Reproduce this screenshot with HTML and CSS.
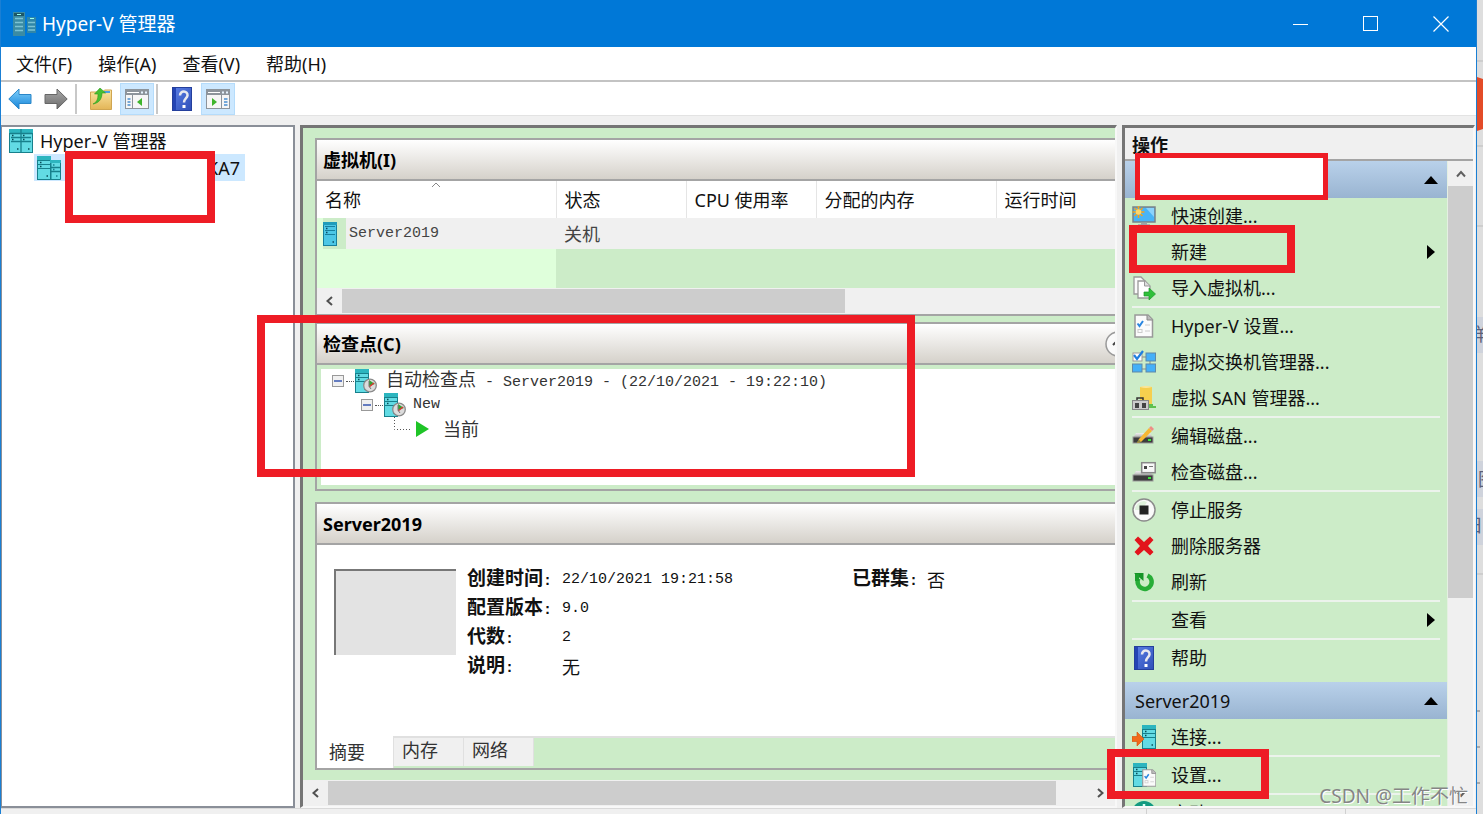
FILE: index.html
```html
<!DOCTYPE html>
<html lang="zh-CN">
<head>
<meta charset="utf-8">
<meta name="viewport" content="width=device-width, initial-scale=1">
<title>Hyper-V 管理器</title>
<link rel="stylesheet" href="styles.css">
</head>
<body>
<svg class="sprite" aria-hidden="true">
  <defs>
    <linearGradient id="g-blue" x1="0" y1="0" x2="0" y2="1"><stop offset="0" stop-color="#7fd0fb"/><stop offset="1" stop-color="#1583d8"/></linearGradient>
    <linearGradient id="g-gray" x1="0" y1="0" x2="0" y2="1"><stop offset="0" stop-color="#a8a8a8"/><stop offset="1" stop-color="#6c6c6c"/></linearGradient>
    <linearGradient id="g-fold" x1="0" y1="0" x2="0" y2="1"><stop offset="0" stop-color="#fbe6a2"/><stop offset="1" stop-color="#e3b557"/></linearGradient>
    <linearGradient id="g-book" x1="0" y1="0" x2="1" y2="1"><stop offset="0" stop-color="#5b7fe6"/><stop offset="1" stop-color="#2f4fb8"/></linearGradient>
    <linearGradient id="g-disk" x1="0" y1="0" x2="0" y2="1"><stop offset="0" stop-color="#f0f0f0"/><stop offset="1" stop-color="#a5a5a5"/></linearGradient>
  </defs>
  <symbol id="i-tower" viewBox="0 0 14 24">
    <rect x="0.5" y="0.5" width="13" height="23" fill="#62dbe4" stroke="#17808c"/>
    <rect x="0" y="0" width="14" height="4" fill="#2cb5bf"/>
    <path d="M1 4.500H13M1 8.500H13M1 12.500H13" stroke="#17808c"/>
    <path d="M3 6.500h1.500M3 10.500h1.500M9.500 20h1.500" stroke="#084c56" stroke-width="1.500"/>
  </symbol>
  <symbol id="i-vm" viewBox="0 0 14 24">
    <rect x="0.500" y="0.500" width="13" height="23" fill="#4cc7e6" stroke="#17809e"/>
    <rect x="0" y="0" width="14" height="3" fill="#1f9cbb"/>
    <path d="M2 4.500H12M2 8.500H12M2 12.500H12" stroke="#17809e"/>
    <path d="M3 6.500h1.500M3 10.500h1.500M9.500 20h1.500" stroke="#084c66" stroke-width="1.500"/>
  </symbol>
  <symbol id="i-app" viewBox="0 0 24 24">
    <path d="M1 0h12v24H1z" fill="#3b8ba3"/><path d="M15 5h9v16h-9z" fill="#2f86a8"/>
    <path d="M2 1h10v3H2z" fill="#1d5666"/>
    <path d="M3 6.500h8M3 10.500h8M3 14.500h8M3 18.500h8M16 10.500h7M16 14.500h7M16 18h7" stroke="#7cc3d3" stroke-width="1.500"/>
    <path d="M5 2.500h4M18 6.500h4" stroke="#9fe" />
  </symbol>
  <symbol id="i-cluster" viewBox="0 0 24 24">
    <rect x="0.500" y="3.500" width="23" height="20" fill="#62dbe4" stroke="#17808c"/>
    <rect x="0" y="0" width="24" height="4" fill="#2cb5bf"/>
    <path d="M12 0V24M1 4.500H23M2 8.500H22M2 12.500H22" stroke="#17808c" stroke-width="1.300"/>
    <path d="M3 6.500h1.500M3 10.500h1.500M14 6.500h1.500M14 10.500h1.500M8 20h1.500M19 20h1.500" stroke="#084c56" stroke-width="1.500"/>
  </symbol>
  <symbol id="i-host" viewBox="0 0 24 24">
    <use href="#i-tower" x="0" y="0" width="14" height="24"/>
    <path d="M14 4.500h9.500v19H14z" fill="#62dbe4" stroke="#17808c"/>
    <path d="M13 4h11v3H13z" fill="#2cb5bf"/>
    <path d="M14 11.500h9M14 15.500h9M16 9h1.500M16 13.500h1.500M19 20h1.500" stroke="#17808c" stroke-width="1.300"/>
  </symbol>
  <symbol id="i-back" viewBox="0 0 24 22"><path d="M0.800 11 11 1V6.500H23V15.500H11V21z" fill="url(#g-blue)" stroke="#2a86c8"/></symbol>
  <symbol id="i-fwd" viewBox="0 0 24 22"><path d="M23.200 11 13 1V6.500H1V15.500H13V21z" fill="url(#g-gray)" stroke="#666"/></symbol>
  <symbol id="i-folder" viewBox="0 0 22 22">
    <path d="M0.500 4h12l2-2h7v19.500h-21z" fill="url(#g-fold)" stroke="#d0a550"/><path d="M14 4h6" stroke="#4ba0e0" stroke-width="2"/>
    <path d="M3 16C7 14 8 11 8 6H4.500L10 0l5.500 5H12C12 11 9 15 3 16z" fill="#48bf31" stroke="#2c9a1c" stroke-width="0.600"/>
  </symbol>
  <symbol id="i-tree" viewBox="0 0 24 20">
    <rect x="0.500" y="0.500" width="23" height="19" fill="#f6f6f6" stroke="#8d949b"/><path d="M1 1h22v5H1z" fill="#8d949b"/>
    <path d="M2 3.500h12" stroke="#fff"/><path d="M16 3.500h2M20 3.500h2" stroke="#e8f4ff" stroke-width="2"/>
    <path d="M7.500 6v14" stroke="#8d949b"/><path d="M2.500 10h3M2.500 13h3M2.500 16h3" stroke="#4a8fd0" stroke-width="1.500"/>
    <path d="M17 9v8l-5-4z" fill="#3eb52c"/>
  </symbol>
  <symbol id="i-pane" viewBox="0 0 24 20">
    <rect x="0.500" y="0.500" width="23" height="19" fill="#f6f6f6" stroke="#8d949b"/><path d="M1 1h22v5H1z" fill="#8d949b"/>
    <path d="M2 3.500h12" stroke="#fff"/><path d="M16 3.500h2M20 3.500h2" stroke="#e8f4ff" stroke-width="2"/>
    <path d="M15.500 6v14" stroke="#8d949b"/><path d="M18 10h3.500M18 13h3.500M18 16h3.500" stroke="#4a8fd0" stroke-width="1.500"/>
    <path d="M6 9v8l5-4z" fill="#3eb52c"/>
  </symbol>
  <symbol id="i-help" viewBox="0 0 20 24">
    <rect x="0.500" y="0.500" width="19" height="23" fill="url(#g-book)" stroke="#243f9c"/><path d="M1 1h3v22H1z" fill="#2444b4"/>
    <path d="M8 8.500C8 3 16 3.500 15.500 8.500 15 11.500 12 11.500 12 15.500" fill="none" stroke="#e8e8ef" stroke-width="2.500"/><rect x="10.500" y="18" width="3" height="3" fill="#fff"/>
  </symbol>
  <symbol id="i-quick" viewBox="0 0 24 20">
    <rect x="1" y="1" width="22" height="15" fill="#48b4f7" stroke="#7a8288" stroke-width="1.500"/><path d="M14 2h8v9z" fill="#8bd3fc"/><path d="M6 19h12M9 17.500h6" stroke="#9aa3a8" stroke-width="1.500"/>
    <path d="M6.500 0v12M.5 6h12M2.500 2l8 8M10.500 2l-8 8" stroke="#f3a31b" stroke-width="1.600"/><circle cx="6.500" cy="6" r="2.800" fill="#ffd76b"/>
  </symbol>
  <symbol id="i-import" viewBox="0 0 24 24">
    <path d="M2 1h7l4 4v13H2z" fill="#fafafa" stroke="#999" stroke-width="1.300"/><path d="M6 5h7l5 5v12H6z" fill="#fff" stroke="#999" stroke-width="1.300"/><path d="M12.500 5v5H18" fill="#ddd" stroke="#999"/>
    <path d="M12 16h5v-4l6.500 6-6.500 6v-4h-5z" fill="#2fbf3a" stroke="#1c9a28" stroke-width="0.700"/>
  </symbol>
  <symbol id="i-settings" viewBox="0 0 20 24">
    <path d="M1 1h13l4.500 4.500V23H1z" fill="#fbfbfb" stroke="#999" stroke-width="1.500"/><path d="M13 1v5h5.500" fill="#bbb" stroke="#888"/>
    <path d="M3.500 9.500 5.500 12 9 7" fill="none" stroke="#2a86e0" stroke-width="2"/><path d="M11 11h5M11 17h5" stroke="#ccc"/><rect x="4" y="15.500" width="4" height="3" fill="none" stroke="#ccc"/>
  </symbol>
  <symbol id="i-switch" viewBox="0 0 24 22">
    <path d="M8 6h8M18 9v5M9 18h8" stroke="#888"/>
    <rect x="1" y="2" width="9" height="8" fill="#fff" stroke="#999"/><path d="M2 4l3 4L11 0" fill="none" stroke="#1f7fe0" stroke-width="2.200"/>
    <rect x="14" y="2" width="9.500" height="8" fill="#45b0f8" stroke="#5f88a8"/><rect x="0.500" y="13" width="9.500" height="8" fill="#45b0f8" stroke="#5f88a8"/><rect x="14" y="13" width="9.500" height="8" fill="#45b0f8" stroke="#5f88a8"/>
  </symbol>
  <symbol id="i-san" viewBox="0 0 24 24">
    <path d="M8 1q6-1 12 0v18H8z" fill="#f6cf4e"/><path d="M8 1q6-2 12 0-6 2-12 0z" fill="#fbe69a"/>
    <path d="M16 18h5v2h3v2h-8z" fill="#5fc04e"/><rect x="0.500" y="14.500" width="16" height="9" fill="#ccc" stroke="#888"/><path d="M5 14v-2h6v2" fill="none" stroke="#333" stroke-width="1.500"/><path d="M3 17h4v5H3zM10 17h4v5h-4z" fill="#444"/>
  </symbol>
  <symbol id="i-edit" viewBox="0 0 24 20">
    <path d="M4 7h14l3 5H1z" fill="url(#g-disk)"/><rect x="1" y="11" width="20" height="6" fill="#3c3c3c" stroke="#999"/><rect x="16" y="13" width="3" height="2" fill="#3ce43c"/>
    <path d="M5 17l2-4L17 2l3 3L9 16z" fill="#f7b833"/><path d="M17 2l2-2 3 3-2 2z" fill="#ee8d86"/><path d="M5 17l1.500-3.500 2.500 2z" fill="#884"/>
  </symbol>
  <symbol id="i-inspect" viewBox="0 0 24 22">
    <path d="M4 10h14l3 5H1z" fill="url(#g-disk)"/><rect x="1" y="14" width="20" height="6" fill="#3c3c3c" stroke="#999"/><rect x="16" y="16" width="3" height="2" fill="#3ce43c"/>
    <rect x="9.700" y="1.700" width="13.500" height="10" fill="#f8f8f8" stroke="#888" stroke-width="1.500"/><path d="M12 6.500h3" stroke="#444" stroke-width="3"/><path d="M17 5.500h4" stroke="#777"/>
  </symbol>
  <symbol id="i-stop" viewBox="0 0 24 24"><circle cx="12" cy="12" r="11" fill="#fafafa" stroke="#8b8b8b" stroke-width="1.500"/><path d="M3 12A9 9 0 0 1 12 3l3 1-5 8z" fill="#dff2dc"/><rect x="7.500" y="7.500" width="9" height="9" fill="#222"/></symbol>
  <symbol id="i-del" viewBox="0 0 20 20"><path d="M4 0.500 10 6l6-5.500L19.500 4 14 10l5.500 6-3.500 3.500L10 14l-6 5.500L.5 16 6 10 .5 4z" fill="#e2141c"/></symbol>
  <symbol id="i-refresh" viewBox="0 0 20 20"><path d="M13.500 3.500A7 7 0 1 1 4.500 6.500" fill="none" stroke="#27ad37" stroke-width="4.500"/><path d="M0 1H9.500v8z" fill="#159427"/><path d="M3 9V2" stroke="#1c9f2e" stroke-width="4"/></symbol>
  <symbol id="i-connect" viewBox="0 0 24 24"><use href="#i-tower" x="10" y="0" width="14" height="24"/><path d="M0 11.500h5V7l7 7-7 7v-4.500H0z" fill="#f26a1b" stroke="#d04e08" stroke-width="0.600"/></symbol>
  <symbol id="i-vmset" viewBox="0 0 24 24"><use href="#i-tower" x="1" y="0" width="14" height="24"/><use href="#i-settings" x="10" y="6" width="15" height="18"/></symbol>
  <symbol id="i-start" viewBox="0 0 24 24"><circle cx="12" cy="12" r="12" fill="#129a80"/><path d="M12 3v9" stroke="#d8fff4" stroke-width="2.500"/></symbol>
  <symbol id="i-snap" viewBox="0 0 22 24">
    <use href="#i-tower" x="0" y="0" width="14" height="24"/><circle cx="15" cy="16.500" r="6.300" fill="#dcdcdc" stroke="#8a8a8a" stroke-width="1.300"/>
    <path d="M14 11l6 4-6 2z" fill="#34a334"/><path d="M14 18l5-4" stroke="#d33" stroke-width="1.500"/><path d="M14 12v5l2 3" stroke="#777" fill="none"/>
  </symbol>
  <symbol id="i-minus" viewBox="0 0 12 12"><rect x="0.500" y="0.500" width="11" height="11" fill="#f0f0f0" stroke="#999"/><path d="M2 6h8" stroke="#3656b0" stroke-width="1.500"/></symbol>
  <symbol id="i-up" viewBox="0 0 14 8"><path d="M0 8 7 0l7 8z" fill="#000"/></symbol>
  <symbol id="i-right" viewBox="0 0 8 14"><path d="M0 0l8 7-8 7z" fill="#000"/></symbol>
  <symbol id="i-cl" viewBox="0 0 8 10"><path d="M6.500 1 2 5l4.500 4" fill="none" stroke="#505050" stroke-width="2"/></symbol>
  <symbol id="i-cr" viewBox="0 0 8 10"><path d="M1.500 1 6 5 1.500 9" fill="none" stroke="#505050" stroke-width="2"/></symbol>
  <symbol id="i-cu" viewBox="0 0 10 8"><path d="M1 6.500 5 2l4 4.500" fill="none" stroke="#606060" stroke-width="2"/></symbol>
  <symbol id="i-cd" viewBox="0 0 10 8"><path d="M1 1.500 5 6l4-4.500" fill="none" stroke="#606060" stroke-width="2"/></symbol>
</svg>

<div class="desktop">
  <div class="window">
    <header class="titlebar">
      <svg class="ic24"><use href="#i-app"/></svg>
      <h1 class="title">Hyper-V 管理器</h1>
      <div class="controls">
        <button class="ctl" aria-label="最小化"><svg width="16" height="16"><path d="M0 8.500H15" stroke="#fff"/></svg></button>
        <button class="ctl" aria-label="最大化"><svg width="16" height="16"><rect x="0.500" y="0.500" width="14" height="14" fill="none" stroke="#fff"/></svg></button>
        <button class="ctl" aria-label="关闭"><svg width="16" height="16"><path d="M.5.5l15 15M15.500.5l-15 15" stroke="#fff" stroke-width="1.200"/></svg></button>
      </div>
    </header>
    <nav class="menubar">
      <button class="menu">文件(F)</button>
      <button class="menu">操作(A)</button>
      <button class="menu">查看(V)</button>
      <button class="menu">帮助(H)</button>
    </nav>
    <div class="toolbar">
      <button class="tool" aria-label="后退"><svg width="24" height="22"><use href="#i-back"/></svg></button>
      <button class="tool" aria-label="前进"><svg width="24" height="22"><use href="#i-fwd"/></svg></button>
      <span class="divider"></span>
      <button class="tool" aria-label="上一级"><svg width="22" height="22"><use href="#i-folder"/></svg></button>
      <button class="tool on" aria-label="显示控制台树"><svg width="24" height="20"><use href="#i-tree"/></svg></button>
      <span class="divider"></span>
      <button class="tool" aria-label="帮助"><svg width="20" height="24"><use href="#i-help"/></svg></button>
      <button class="tool on" aria-label="显示操作窗格"><svg width="24" height="20"><use href="#i-pane"/></svg></button>
    </div>

    <main class="main">
      <aside class="tree">
        <div class="node"><svg class="ic24"><use href="#i-cluster"/></svg>Hyper-V 管理器</div>
        <div class="node child"><svg class="ic24"><use href="#i-host"/></svg><span class="host">KA7</span></div>
        <span class="mark mark-host"></span>
      </aside>

      <div class="column">
        <div class="center">
          <div class="stack">
            <section class="box">
              <h2 class="bar">虚拟机(I)</h2>
              <table class="vms">
                <colgroup><col class="c-name"><col class="c-state"><col class="c-state"><col class="c-mem"><col></colgroup>
                <thead><tr>
                  <th class="sorted">名称<svg class="sort" width="10" height="6"><path d="M1 5l4-4 4 4" fill="none" stroke="#888"/></svg></th>
                  <th>状态</th><th>CPU 使用率</th><th>分配的内存</th><th>运行时间</th>
                </tr></thead>
                <tbody>
                  <tr class="vm"><td class="name"><div class="vmname"><span class="vmicon"><svg width="14" height="24"><use href="#i-vm"/></svg></span><span class="mono">Server2019</span></div></td><td>关机</td><td></td><td></td><td></td></tr>
                  <tr class="blank"><td></td><td></td><td></td><td></td><td></td></tr>
                </tbody>
              </table>
              <div class="hscroll"><svg class="arrow" width="8" height="10"><use href="#i-cl"/></svg><span class="thumb part"></span></div>
            </section>

            <section class="box checks">
              <h2 class="bar">检查点(C)<svg class="collapse" width="26" height="26"><circle cx="13" cy="13" r="12" fill="#fafafa" stroke="#999" stroke-width="1.500"/><path d="M8 14l5-5 5 5" fill="none" stroke="#444" stroke-width="2"/></svg></h2>
              <div class="snaps">
                <div class="snap"><svg width="12" height="12"><use href="#i-minus"/></svg><i class="dots"></i><svg width="22" height="24"><use href="#i-snap"/></svg><span class="label">自动检查点<span class="mono"> - Server2019 - (22/10/2021 - 19:22:10)</span></span></div>
                <div class="snap lvl1"><svg width="12" height="12"><use href="#i-minus"/></svg><i class="dots"></i><svg width="22" height="24"><use href="#i-snap"/></svg><span class="label mono">New</span></div>
                <div class="snap lvl2"><svg width="18" height="24"><path d="M1.500 0V12.500H18" fill="none" stroke="#555" stroke-dasharray="1 2"/></svg><svg class="play" width="13" height="16"><path d="M0 0l13 8-13 8z" fill="#1fc427"/></svg><span class="now">当前</span></div>
              </div>
            </section>

            <section class="box details">
              <h2 class="bar">Server2019</h2>
              <div class="info">
                <div class="preview"></div>
                <dl class="facts">
                  <dt>创建时间<span class="mono">:</span></dt><dd class="mono">22/10/2021 19:21:58</dd>
                  <dt>配置版本<span class="mono">:</span></dt><dd class="mono">9.0</dd>
                  <dt>代数<span class="mono">:</span></dt><dd class="mono">2</dd>
                  <dt>说明<span class="mono">:</span></dt><dd>无</dd>
                </dl>
                <dl class="facts second"><dt>已群集<span class="mono">:</span></dt><dd>否</dd></dl>
              </div>
              <div class="tabs"><button class="tab active">摘要</button><button class="tab">内存</button><button class="tab">网络</button></div>
            </section>
          </div>
          <div class="hscroll"><svg class="arrow" width="8" height="10"><use href="#i-cl"/></svg><span class="thumb"></span><svg class="arrow end" width="8" height="10"><use href="#i-cr"/></svg></div>
        </div>
        <span class="mark mark-checks"></span>
      </div>

      <div class="column">
        <aside class="actions">
          <h2 class="caption">操作</h2>
          <div class="scroller">
            <div class="list">
              <h3 class="group"><span></span><svg width="14" height="8"><use href="#i-up"/></svg></h3>
              <button class="act"><svg class="ic"><use href="#i-quick"/></svg>快速创建...</button>
              <button class="act"><span class="ic"></span>新建<svg class="more" width="8" height="14"><use href="#i-right"/></svg></button>
              <button class="act"><svg class="ic"><use href="#i-import"/></svg>导入虚拟机...</button>
              <hr class="sep">
              <button class="act"><svg class="ic"><use href="#i-settings"/></svg>Hyper-V 设置...</button>
              <button class="act"><svg class="ic"><use href="#i-switch"/></svg>虚拟交换机管理器...</button>
              <button class="act"><svg class="ic"><use href="#i-san"/></svg>虚拟 SAN 管理器...</button>
              <hr class="sep">
              <button class="act"><svg class="ic"><use href="#i-edit"/></svg>编辑磁盘...</button>
              <button class="act"><svg class="ic"><use href="#i-inspect"/></svg>检查磁盘...</button>
              <hr class="sep">
              <button class="act"><svg class="ic"><use href="#i-stop"/></svg>停止服务</button>
              <button class="act"><svg class="ic small"><use href="#i-del"/></svg>删除服务器</button>
              <button class="act"><svg class="ic small"><use href="#i-refresh"/></svg>刷新</button>
              <hr class="sep">
              <button class="act"><span class="ic"></span>查看<svg class="more" width="8" height="14"><use href="#i-right"/></svg></button>
              <hr class="sep">
              <button class="act"><svg class="ic"><use href="#i-help"/></svg>帮助</button>
              <h3 class="group later"><span>Server2019</span><svg width="14" height="8"><use href="#i-up"/></svg></h3>
              <button class="act"><svg class="ic"><use href="#i-connect"/></svg>连接...</button>
              <hr class="sep">
              <button class="act"><svg class="ic"><use href="#i-vmset"/></svg>设置...</button>
              <hr class="sep">
              <button class="act"><svg class="ic"><use href="#i-start"/></svg>启动...</button>
            </div>
            <div class="vscroll"><span class="vend"><svg width="10" height="8"><use href="#i-cu"/></svg></span><span class="vthumb"></span><span class="vend low"><svg width="10" height="8"><use href="#i-cd"/></svg></span></div>
          </div>
        </aside>
        <span class="mark mark-server"></span>
        <span class="mark mark-new"></span>
        <span class="mark mark-settings"></span>
      </div>
    </main>
    <footer class="status"><span></span><span></span></footer>
  </div>

  <svg class="behind" width="6" height="814" aria-hidden="true">
    <path d="M0 61h6M0 146h6M0 226h6M0 574h6" stroke="#bdbdbd"/>
    <path d="M0 77l6 2v50l-6 2z" fill="#e34b28"/>
    <path d="M0 317h6v36H0zM0 461h6v36H0zM0 509h6v36H0z" fill="#cfd3dc"/>
    <path d="M0 711h3M0 747h3M0 783h3" stroke="#777"/>
    <text x="-8" y="341" class="peek">样</text><text x="1" y="486" class="peek">图</text><text x="-12" y="532" class="peek">日</text>
  </svg>
  <div class="watermark">CSDN @工作不忙</div>
</div>
</body>
</html>
```
FILE: styles.css
```css
* { box-sizing: border-box; }
body {
  margin: 0;
  font: 18px/24px "Noto Sans", "Noto Sans CJK SC", sans-serif;
  color: #111;
  overflow: hidden;
}
h1, h2, h3, dl, dd { margin: 0; font: inherit; }
button { font: inherit; color: inherit; border: 0; background: none; padding: 0; }
svg { display: block; flex: none; }
.sprite { position: absolute; width: 0; height: 0; }
.ic24 { width: 24px; height: 24px; }
.mono { font-family: "Liberation Mono", "Noto Sans CJK SC", monospace; font-size: 15px; }

.desktop { position: relative; display: flex; height: 100vh; background: #dedede; }
.window {
  flex: 1;
  min-width: 0;
  display: flex;
  flex-direction: column;
  background: #f0f0f0;
  border: solid #1a7fd4;
  border-width: 0 1px;
}
.behind { width: 6px; overflow: hidden; }
.peek { font-size: 18px; fill: #5c6078; }

.titlebar { display: flex; align-items: center; height: 47px; padding-left: 11px; background: #0078d7; color: #fff; }
.title { flex: 1; margin-left: 6px; font-size: 19px; }
.controls { display: flex; }
.ctl { width: 70px; height: 47px; display: grid; place-items: center; }

.menubar { display: flex; gap: 26px; height: 35px; padding: 0 15px; background: #fff; border-bottom: 2px solid #c3c3c3; }
.toolbar { display: flex; align-items: center; gap: 2px; height: 34px; padding-left: 2px; background: #fff; border-bottom: 1px solid #e3e3e3; }
.tool { width: 34px; height: 32px; display: grid; place-items: center; }
.tool.on { background: #cce8ff; border: 1px solid #b5dcfb; }
.divider { width: 2px; height: 30px; margin-right: 5px; background: #c8c8c8; }

.main {
  flex: 1;
  min-height: 0;
  display: grid;
  grid-template-columns: 294px minmax(0, 1fr) 353px;
  grid-template-rows: minmax(0, 1fr);
  gap: 5px;
  padding: 9px 1px 0 0;
}
.status { display: flex; gap: 198px; justify-content: flex-end; height: 6px; border-top: 1px solid #d9d9d9; padding-right: 130px; }
.status span { width: 1px; background: #d0d0d0; }

.tree { position: relative; background: #fff; border: 2px solid #8a8f98; border-left-width: 1px; padding: 0 0 0 7px; }
.node { display: flex; align-items: center; gap: 7px; height: 27px; }
.child { width: 211px; margin-left: 25px; padding: 0 5px 0 3px; background: #cce8ff; }
.host { margin-left: auto; }

.column { position: relative; min-width: 0; min-height: 0; }
.center, .actions { display: flex; flex-direction: column; height: 100%; border: 3px solid #757575; border-right: 2px solid #f8f8f8; border-bottom: 2px solid #f8f8f8; overflow: hidden; }
.center { background: #ccecc8; }
.stack { flex: 1; min-height: 0; display: flex; flex-direction: column; padding: 10px 0 10px 12px; }
.box { border: 2px solid #a4a4a4; border-right: 0; }
.bar {
  display: flex;
  align-items: center;
  height: 41px;
  padding-left: 6px;
  font-weight: bold;
  color: #000;
  background: linear-gradient(#fff, #d5d1ca);
  border-bottom: 2px solid #a4a4a4;
}
.collapse { margin: 0 -16px 0 auto; }

.vms { width: 100%; table-layout: fixed; border-collapse: collapse; }
.vms col { width: auto; }
.vms .c-name { width: 239px; }
.vms .c-state { width: 130px; }
.vms .c-mem { width: 180px; }
.vms th { height: 37px; padding: 0 8px; font-weight: normal; text-align: left; background: #fff; border-right: 1px solid #e5e5e5; }
.vms th:last-child { border-right: 0; }
.vms td { padding: 0 8px; color: #444; }
.sorted { position: relative; }
.sort { position: absolute; top: 1px; left: 48%; }
.vm { height: 31px; background: #f0f0f0; }
.vms .name { padding: 0; }
.vmname { display: flex; align-items: center; }
.vmicon { display: flex; align-items: center; width: 29px; height: 31px; margin-right: 3px; background: #ccecc8; border-left: 6px solid #dfffdb; }
.blank { height: 39px; }
.blank td:first-child { background: #dfffdb; }

.hscroll { display: flex; align-items: center; height: 26px; padding: 1px 0; background: #f0f0f0; }
.arrow { width: 25px; padding: 0 8px; }
.hscroll .thumb { flex: 1; height: 100%; background: #cdcdcd; }
.hscroll .part { flex: none; width: 63%; }
.arrow.end { margin-left: 30px; width: 29px; padding: 0 10px; }

.checks { margin-top: 6px; }
.snaps { height: 124px; background: #fff; border: solid #ccecc8; border-width: 4px 0 4px 4px; padding: 0 0 0 11px; }
.snap { display: flex; align-items: center; height: 24px; color: #333; }
.dots { width: 8px; margin: 0 1px 0 2px; border-top: 1px dotted #555; }
.label { margin-left: 9px; white-space: pre; }
.lvl1 { margin-left: 29px; }
.lvl1 .label { margin-left: 7px; }
.lvl2 { margin-left: 61px; }
.play { margin-left: 5px; }
.now { margin-left: 14px; }

.details { flex: 1; display: flex; flex-direction: column; margin-top: 11px; }
.info { flex: 1; display: flex; align-items: flex-start; padding: 20px 17px 0; background: #fff; border-bottom: 2px solid #e0e0e0; }
.preview { width: 122px; height: 86px; margin-top: 4px; background: #e3e3e3; border: solid #777; border-width: 2px 0 0 2px; }
.facts { display: grid; grid-template-columns: 95px 195px; grid-auto-rows: 29px; align-items: center; margin-left: 11px; line-height: 24px; }
.facts dt { font-size: 19px; font-weight: bold; white-space: nowrap; }
.second { grid-template-columns: 75px 60px; margin-left: 95px; }
.tabs { display: flex; align-items: flex-start; height: 30px; background: #ccecc8; }
.tab { width: 70px; height: 28px; padding: 0 0 4px 8px; text-align: left; color: #333; background: #f0f0f0; border-right: 1px solid #e0e0e0; }
.tab.active { width: 77px; height: 32px; margin-top: -2px; padding: 0 0 0 12px; background: #fff; }

.caption { height: 33px; padding: 5px 7px 0; font-weight: bold; border-bottom: 2px solid #a4a4a4; background: #f0f0f0; }
.scroller { flex: 1; min-height: 0; display: flex; }
.list { flex: 1; min-width: 0; overflow: hidden; background: #ccecc8; }
.group { display: flex; align-items: center; justify-content: space-between; height: 37px; padding: 0 9px 0 10px; background: linear-gradient(#b9d1ea, #99b4d1); }
.later { margin-top: 6px; }
.act { display: flex; align-items: center; width: 100%; height: 36px; padding: 0 12px 0 7px; text-align: left; }
.ic { width: 24px; height: 24px; margin-right: 15px; }
.ic.small { padding: 2px; }
.more { margin-left: auto; }
.sep { height: 2px; margin: 0 7px; border: 0; background: #ecf3ec; }
.vscroll { display: flex; flex-direction: column; width: 26px; background: #f0f0f0; border-left: 1px solid #e4f0e2; }
.vend { display: grid; place-items: center; height: 25px; }
.vthumb { flex: 0 1 412px; background: #cdcdcd; }
.vend.low { margin-top: auto; }

.mark { position: absolute; z-index: 2; border: 8px solid #ee1c25; pointer-events: none; }
.mark-host { left: 63px; top: 24px; width: 150px; height: 72px; background: #fff; }
.mark-checks { left: -43px; top: 190px; width: 658px; height: 162px; }
.mark-server { left: 13px; top: 28px; width: 193px; height: 47px; border-width: 5px; background: #fff; }
.mark-new { left: 7px; top: 100px; width: 166px; height: 48px; }
.mark-settings { left: -15px; bottom: 9px; width: 162px; height: 50px; }

.watermark { position: absolute; right: 15px; bottom: 6px; z-index: 3; font-size: 19px; color: #858585; text-shadow: 1px 1px 0 #fff; }
```
